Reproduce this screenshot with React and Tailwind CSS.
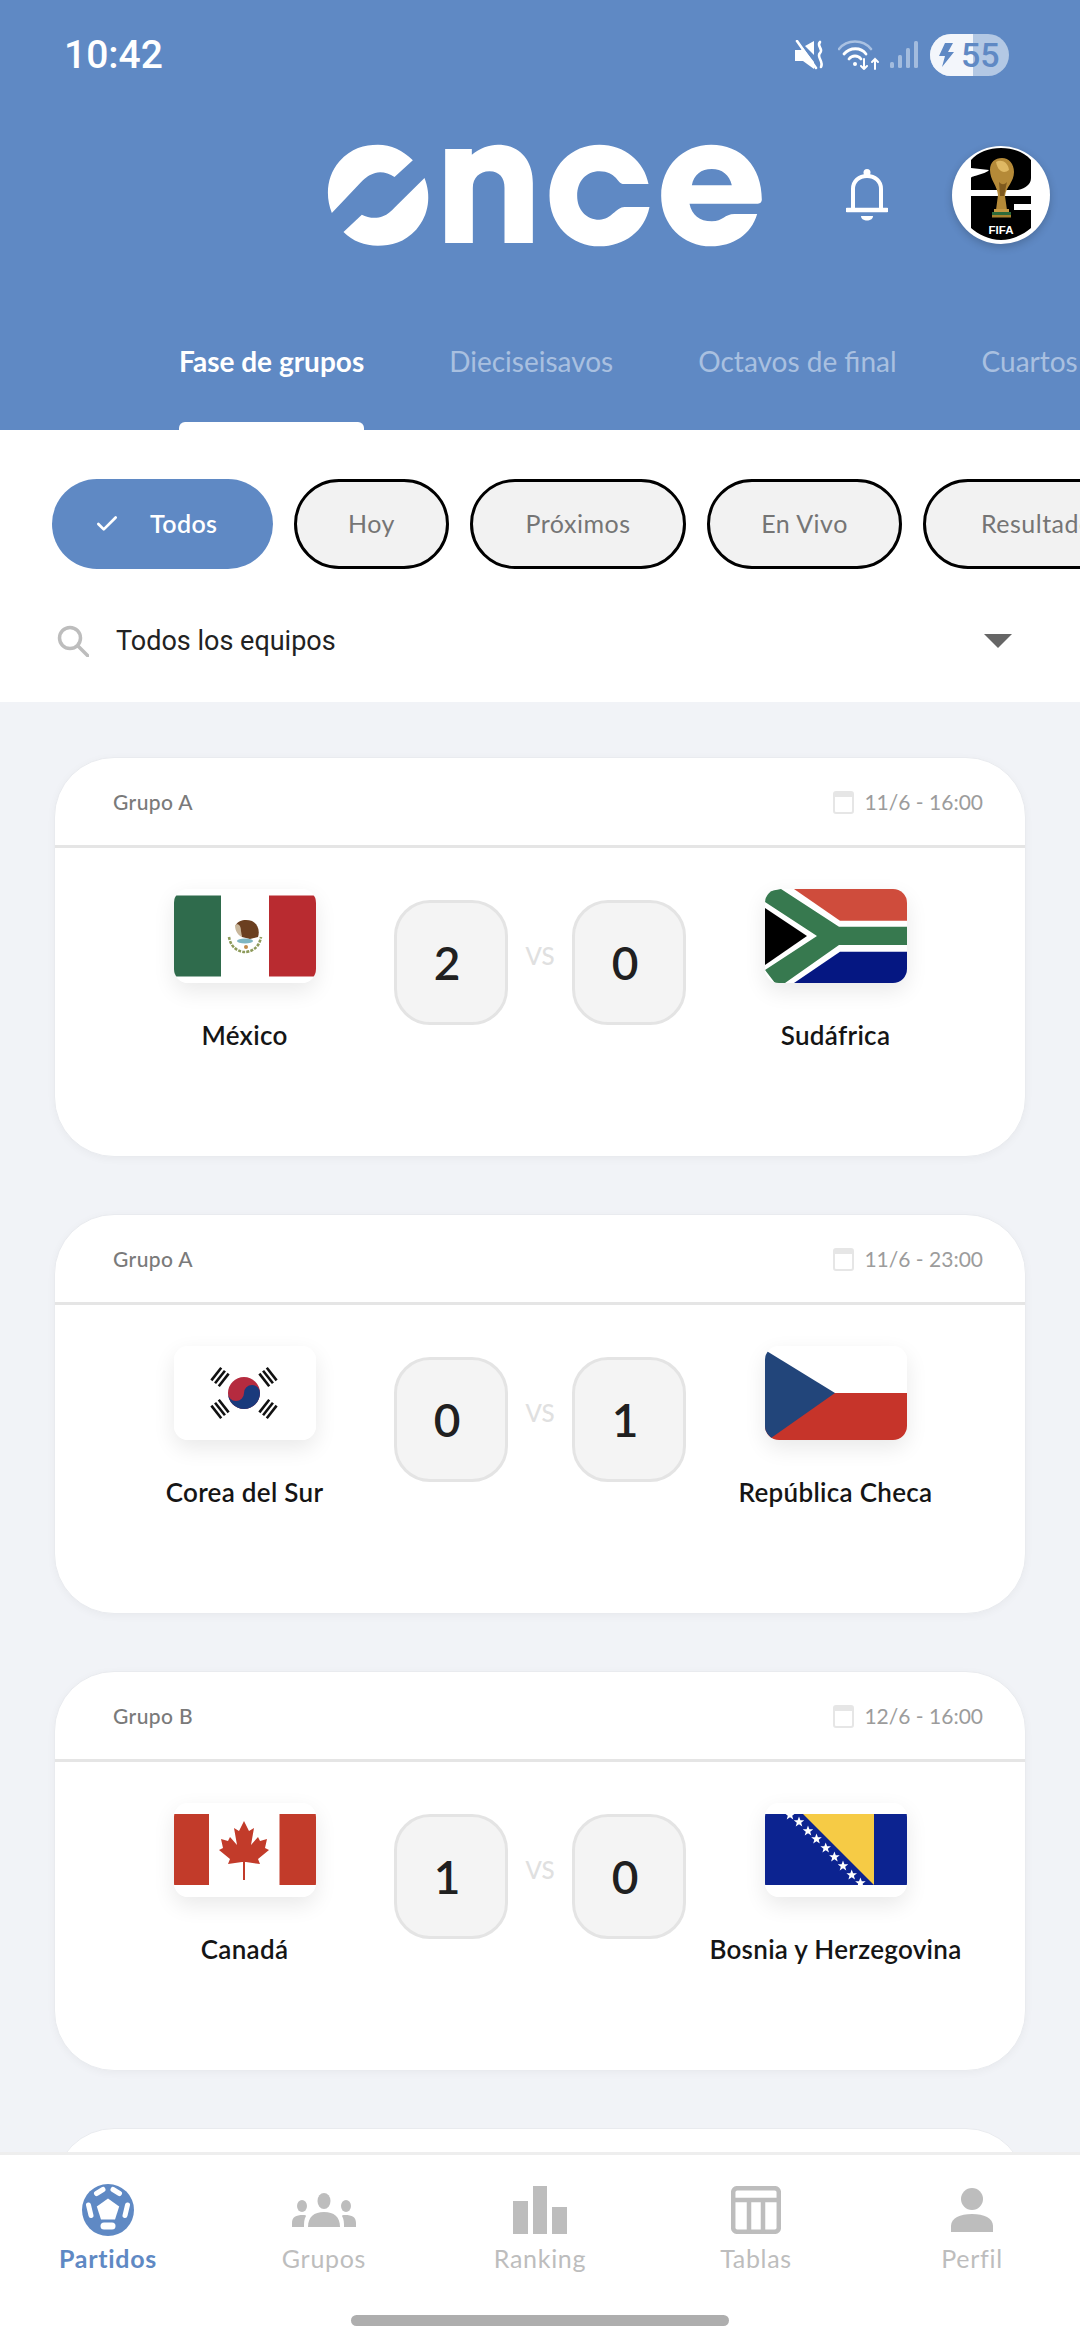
import { Check } from 'lucide-react';

// Logo drawn from the brand shapes
const OnceLogo = () => (
  <svg viewBox="75 70 1310 315" className="w-[437px] h-[105px] block shrink-0" fill="#fff">
    <path d="M92 280 C72 230 76 170 115 125 C150 85 190 75 230 75 C270 75 305 92 335 122 L280 172 C262 160 240 155 222 160 C205 165 195 172 180 187 Z" />
    <path d="M370 175 C390 225 385 285 345 330 C310 368 270 378 230 378 C190 378 155 365 127 337 L182 285 C200 295 225 298 245 290 C260 284 270 275 282 262 Z" />
    <path d="M432 88 H512 V105 C535 85 565 75 590 75 C655 75 695 120 695 190 V370 H610 V205 C610 175 595 155 565 155 C535 155 515 175 515 205 V370 H432 Z" />
    <path d="M1042 193 H965 C950 193 945 155 895 155 C855 155 828 185 828 228 C828 270 855 300 895 300 C930 300 945 262 970 262 H1045 C1030 335 970 380 895 380 C810 380 745 315 745 228 C745 140 810 75 895 75 C970 75 1030 125 1042 193 Z" />
    <path fillRule="evenodd" d="M1382 240 C1382 245 1378 252 1370 252 H1165 C1172 285 1195 305 1232 305 C1265 305 1270 283 1300 283 H1368 C1350 345 1295 380 1230 380 C1145 380 1080 315 1080 228 C1080 140 1145 75 1230 75 C1320 75 1382 140 1382 240 Z M1172 197 H1292 C1285 165 1262 148 1232 148 C1200 148 1178 165 1172 197 Z" />
  </svg>
);

const StatusIcons = () => (
  <div className="flex items-center">
    <svg viewBox="0 0 30 30" className="w-[30px] h-[30px]" fill="none">
      <path d="M0 10 H6 L8 8 L19 22 V29 L8 21 H0 Z" fill="#fff" />
      <path d="M10 6 L19 1 V15 Z" fill="#fff" />
      <path d="M2 1 L21 28" stroke="#fff" strokeWidth="2.6" strokeLinecap="round" />
      <path d="M25 2 C21 6 29 9 25 13 C21 17 29 21 26 27" stroke="#fff" strokeWidth="2.6" strokeLinecap="round" />
    </svg>
    <svg viewBox="0 0 42 30" className="w-[42px] h-[30px] ml-[13px]" fill="none" strokeLinecap="round">
      <path d="M1 9 C9 -1 25 -1 33 9" stroke="#a9c1e2" strokeWidth="2.6" />
      <path d="M6 14 C12 7 23 7 28 14" stroke="#fff" strokeWidth="2.8" />
      <path d="M11 19 C14 15 20 15 23 19" stroke="#fff" strokeWidth="2.8" />
      <circle cx="17" cy="24" r="2" fill="#fff" />
      <path d="M26 19 V29 M23 26 L26 29 L29 26" stroke="#fff" strokeWidth="2" />
      <path d="M37 29 V19 M34 22 L37 19 L40 22" stroke="#fff" strokeWidth="2" />
    </svg>
    <svg viewBox="0 0 28 30" className="w-[28px] h-[30px] ml-[10px]" fill="#a3bcde">
      <rect x="0" y="22" width="4" height="6" rx="1.5" />
      <rect x="8" y="15" width="4" height="13" rx="1.5" />
      <rect x="16" y="8" width="4" height="20" rx="1.5" />
      <rect x="24" y="1" width="4" height="27" rx="1.5" />
    </svg>
    <div className="relative ml-[12px] w-[79px] h-[42px] rounded-full overflow-hidden bg-[#b3c8e4] flex items-center">
      <div className="absolute left-0 top-0 bottom-0 w-[43px] bg-[#f3f6fb]" />
      <svg viewBox="0 0 16 26" className="relative ml-[8px] w-[16px] h-[26px]" fill="#5f89c4">
        <path d="M7 1 H15 L10 10 H16 L4 25 L7 14 H1 Z" />
      </svg>
      <span className="relative ml-[7px] font-['Roboto',sans-serif] font-medium text-[34px] leading-none text-[#5f89c4]">55</span>
    </div>
  </div>
);

const Avatar = () => (
  <div className="shrink-0 w-[98px] h-[98px] rounded-full overflow-hidden bg-white shadow-[0_3px_8px_rgba(0,0,0,0.2)]">
    <svg viewBox="6 6 98 98" className="w-full h-full">
      <path d="M25 20 C32 12 43 8 55 8 C67 8 78 12 85 20 V38 C85 44 80 48 72 50 H25 V38 C25 36 40 34 43 30 L25 28 Z" fill="#000" />
      <path d="M25 56 H85 V64 H68 V70 H85 V88 C78 94 67 100 55 100 C43 100 32 94 25 88 Z" fill="#000" />
      <path d="M44 30 C44 22 49 18 56 18 C63 18 68 24 68 32 C68 42 60 47 59 56 L61 70 H50 L52 55 C51 45 44 40 44 30 Z" fill="#b58a38" />
      <path d="M50 22 C55 19 62 22 63 30 C58 34 52 32 50 22 Z" fill="#dfb863" />
      <path d="M53 42 C56 45 58 45 61 42 L58 56 H54 Z" fill="#7f5a1e" />
      <rect x="48" y="69" width="15" height="3" fill="#c79a44" />
      <rect x="46" y="72" width="19" height="3" fill="#2d6b3a" />
      <rect x="46" y="75" width="19" height="2.5" fill="#a7832f" />
      <text x="55" y="94" textAnchor="middle" fill="#fff" fontSize="11.5" fontWeight="900" fontFamily="Liberation Sans, sans-serif">FIFA</text>
    </svg>
  </div>
);

const MexicoFlag = () => (
  <svg viewBox="0 0 142 94" className="w-full h-full block">
    <rect width="142" height="94" fill="#fff" />
    <rect y="6.5" width="47" height="81" fill="#2f6b4c" />
    <rect x="95" y="6.5" width="47" height="81" fill="#b92b30" />
    <path d="M55 48 C57 60 66 63 71 63 C76 63 85 60 87 48" fill="none" stroke="#8d9a5a" strokeWidth="2.6" strokeDasharray="3 1.2" />
    <path d="M62 36 C64 31 72 30 78 32 C84 35 86 42 84 48 L76 50 L68 48 Z" fill="#6b3f20" />
    <path d="M61 36 C64 34 67 36 67 42 L68 48 C64 46 61 42 61 36 Z" fill="#c9b79c" />
    <ellipse cx="71" cy="52" rx="8" ry="2.6" fill="#7fb6c2" />
    <circle cx="72" cy="58" r="2" fill="#c28a4a" />
  </svg>
);

const SouthAfricaFlag = () => (
  <svg viewBox="0 0 142 94" className="w-full h-full block">
    <rect width="142" height="94" fill="#fff" />
    <polygon points="29,0 142,0 142,31.7 75,31.7" fill="#cf4c3c" />
    <polygon points="29,94 142,94 142,62.7 75,62.7" fill="#051782" />
    <polygon points="16,0 74,37.7 142,37.7 142,56 74,56 20,94 10,94 0,81 52,47 0,13 0,3" fill="#37794f" />
    <polygon points="0,19 42,47 0,76" fill="#000" />
  </svg>
);

const Trigram = ({ x, y, angle }) => (
  <g transform={`translate(${x} ${y}) rotate(${angle})`} fill="#111">
    <rect x="-8" y="-6" width="16" height="2.6" />
    <rect x="-8" y="-1.3" width="16" height="2.6" />
    <rect x="-8" y="3.4" width="16" height="2.6" />
  </g>
);

const KoreaFlag = () => (
  <svg viewBox="0 0 142 94" className="w-full h-full block">
    <rect width="142" height="94" fill="#fff" />
    <Trigram x={46} y={31} angle={-52} />
    <Trigram x={94} y={31} angle={52} />
    <Trigram x={46} y={63} angle={52} />
    <Trigram x={94} y={63} angle={-52} />
    <circle cx="70" cy="47" r="16" fill="#b52b3f" />
    <path d="M54 47 A16 16 0 0 0 86 47 A8 8 0 0 0 70 47 A8 8 0 0 1 54 47 Z" fill="#1a3a7c" />
  </svg>
);

const CzechFlag = () => (
  <svg viewBox="0 0 142 94" className="w-full h-full block">
    <rect width="142" height="94" fill="#fff" />
    <rect y="47" width="142" height="47" fill="#c6342a" />
    <polygon points="0,4 70,47 6,92 0,85" fill="#22457a" />
  </svg>
);

const CanadaFlag = () => (
  <svg viewBox="0 0 142 94" className="w-full h-full block">
    <rect width="142" height="94" fill="#fff" />
    <rect y="11" width="35" height="71" fill="#c23b2a" />
    <rect x="105.5" y="11" width="36.5" height="71" fill="#c23b2a" />
    <polygon
      points="70,18 75,28 80,25 77,42 84,34 86,38 93,36 91,45 95,47 84,56 86,61 72,59 71,59 71,77 69,77 69,59 68,59 54,61 56,56 45,47 49,45 47,36 54,38 56,34 63,42 60,25 65,28"
      fill="#c23b2a"
    />
  </svg>
);

const BOSNIA_STARS = [
  [25, 1], [34, 8], [43, 17], [51.5, 25], [60.7, 34], [69.4, 43], [78, 52], [86.7, 61], [95.4, 69],
];

const BosniaFlag = () => (
  <svg viewBox="0 0 142 94" className="w-full h-full block">
    <rect width="142" height="94" fill="#fff" />
    <svg x="0" y="11" width="142" height="71" viewBox="0 0 142 71">
      <rect width="142" height="71" fill="#0c2390" />
      <polygon points="38,0 109,0 109,71" fill="#f6cb45" />
      {BOSNIA_STARS.map(([x, y]) => (
        <polygon
          key={x}
          transform={`translate(${x} ${y})`}
          points="0,-5.5 1.4,-1.8 5.3,-1.7 2.2,0.7 3.3,4.4 0,2.2 -3.3,4.4 -2.2,0.7 -5.3,-1.7 -1.4,-1.8"
          fill="#fff"
        />
      ))}
    </svg>
  </svg>
);

const MATCHES = [
  { group: 'Grupo A', date: '11/6 - 16:00', home: 'México', away: 'Sudáfrica', homeFlag: MexicoFlag, awayFlag: SouthAfricaFlag, homeScore: 2, awayScore: 0 },
  { group: 'Grupo A', date: '11/6 - 23:00', home: 'Corea del Sur', away: 'República Checa', homeFlag: KoreaFlag, awayFlag: CzechFlag, homeScore: 0, awayScore: 1 },
  { group: 'Grupo B', date: '12/6 - 16:00', home: 'Canadá', away: 'Bosnia y Herzegovina', homeFlag: CanadaFlag, awayFlag: BosniaFlag, homeScore: 1, awayScore: 0 },
];

const Team = ({ name, Flag }) => (
  <div className="flex flex-col items-center">
    <div className="w-[142px] h-[94px] rounded-[14px] overflow-hidden bg-white shadow-[0_8px_22px_rgba(0,0,0,0.09)]">
      <Flag />
    </div>
    <span className="mt-[34px] text-[26px] leading-[36px] font-semibold text-[#151515] tracking-[0.3px] whitespace-nowrap">{name}</span>
  </div>
);

const Score = ({ value }) => (
  <div className="w-[114px] h-[125px] rounded-[36px] border-[3px] border-[#e4e4e4] bg-[#f4f4f4] flex items-center justify-center pr-[8px] text-[46px] font-semibold text-[#202020]">
    {value}
  </div>
);

const MatchCard = ({ match }) => (
  <div className="shrink-0 h-[400px] rounded-[60px] bg-white border border-[#e9ebef] shadow-[0_2px_8px_rgba(0,0,0,0.04)] overflow-hidden">
    <div className="h-[90px] border-b-[3px] border-[#e5e5e5] pl-[58px] pr-[42px] flex items-center justify-between">
      <span className="text-[21px] font-medium text-[#7a7a7a] tracking-[0.4px]">{match.group}</span>
      <div className="flex items-center gap-[10px]">
        <svg viewBox="0 0 21 24" className="w-[21px] h-[24px]" fill="none">
          <rect x="1" y="2" width="19" height="21" rx="2" stroke="#e6e6e6" strokeWidth="2" />
          <rect x="1" y="2" width="19" height="5" fill="#e6e6e6" />
        </svg>
        <span className="text-[21px] text-[#9c9c9c]">{match.date}</span>
      </div>
    </div>
    <div className="pt-[41px] px-[40px] grid grid-cols-[299px_1fr_299px]">
      <Team name={match.home} Flag={match.homeFlag} />
      <div className="flex items-start justify-between mt-[11px]">
        <Score value={match.homeScore} />
        <span className="mt-[38px] text-[24px] font-medium text-[#e0e0e0]">VS</span>
        <Score value={match.awayScore} />
      </div>
      <Team name={match.away} Flag={match.awayFlag} />
    </div>
  </div>
);

const FILTERS = ['Hoy', 'Próximos', 'En Vivo', 'Resultados'];
const FILTER_WIDTHS = ['w-[155px]', 'w-[216px]', 'w-[195px]', 'w-[240px]'];

const NAV = [
  {
    label: 'Partidos',
    active: true,
    icon: (
      <svg viewBox="0 0 54 54" className="w-[54px] h-[54px]">
        <circle cx="27" cy="27" r="26" fill="#5f89c4" />
        <polygon points="27,15.5 38.2,23.5 34,36.5 20,36.5 15.8,23.5" fill="#fff" />
        <g stroke="#fff" strokeLinecap="round" fill="none">
          <path d="M15.5 10.5 L22 6.5" strokeWidth="5" />
          <path d="M32 6.5 L38.5 10.5" strokeWidth="5" />
          <path d="M46.5 22 L44 32.5" strokeWidth="5" />
          <path d="M7.5 22 L10 32.5" strokeWidth="5" />
          <path d="M23 43 L31 43" strokeWidth="7" />
        </g>
      </svg>
    ),
  },
  {
    label: 'Grupos',
    icon: (
      <svg viewBox="0 0 64 34" className="w-[64px] h-[34px]" fill="#bdbdbd">
        <ellipse cx="32" cy="8" rx="6.5" ry="8" />
        <ellipse cx="10" cy="13" rx="5" ry="6" />
        <ellipse cx="54" cy="13" rx="5" ry="6" />
        <path d="M16 34 C16 24 22 19 32 19 C42 19 48 24 48 34 Z" />
        <path d="M0 34 V30 C0 24 4 22 11 22 C13 22 14 22 14 23 C12 26 12 30 12 34 Z" />
        <path d="M64 34 V30 C64 24 60 22 53 22 C51 22 50 22 50 23 C52 26 52 30 52 34 Z" />
      </svg>
    ),
  },
  {
    label: 'Ranking',
    icon: (
      <svg viewBox="0 0 54 48" className="w-[54px] h-[48px]" fill="#bdbdbd">
        <rect x="0" y="15" width="15" height="33" />
        <rect x="20" y="0" width="14" height="48" />
        <rect x="39" y="21" width="15" height="27" />
      </svg>
    ),
  },
  {
    label: 'Tablas',
    icon: (
      <svg viewBox="0 0 50 48" className="w-[50px] h-[48px]" fill="none" stroke="#bdbdbd" strokeWidth="4.5">
        <rect x="2.2" y="2.2" width="45.6" height="43.6" rx="4" />
        <path d="M2 14 H48 M18 14 V46 M32 14 V46" />
      </svg>
    ),
  },
  {
    label: 'Perfil',
    icon: (
      <svg viewBox="0 0 44 44" className="w-[44px] h-[44px]" fill="#bdbdbd">
        <ellipse cx="22" cy="11" rx="11" ry="11" />
        <path d="M1 44 V38 C1 30 10 26 22 26 C34 26 43 30 43 38 V44 Z" />
      </svg>
    ),
  },
];

export default function App() {
  return (
    <div className="w-[1080px] h-[2340px] overflow-hidden flex flex-col bg-[#f1f3f7] font-['Lato',sans-serif]">
      {/* Blue header */}
      <header className="shrink-0 h-[430px] bg-[#5f89c4] flex flex-col">
        <div className="h-[110px] pl-[64px] pr-[71px] flex items-center justify-between">
          <span className="font-['Roboto',sans-serif] font-medium text-[39px] leading-none text-white">10:42</span>
          <StatusIcons />
        </div>
        <div className="h-[110px] mt-[30px] pl-[326px] flex items-center">
          <OnceLogo />
          <svg viewBox="0 0 42 52" className="shrink-0 ml-[83px] w-[42px] h-[52px]" fill="none" stroke="#fff">
            <path d="M7 39 V20 C7 12 13 7 21 7 C29 7 35 12 35 20 V39" strokeWidth="4" />
            <path d="M1 41 H41" strokeWidth="4.5" strokeLinecap="round" />
            <circle cx="21" cy="3.5" r="3.5" fill="#fff" stroke="none" />
            <path d="M15 47 H27 C27 53 15 53 15 47 Z" fill="#fff" stroke="none" />
          </svg>
          <div className="ml-[64px]">
            <Avatar />
          </div>
        </div>
        <nav className="mt-auto h-[96px] pl-[179px] flex gap-[85px] overflow-hidden whitespace-nowrap">
          <div className="flex flex-col items-stretch">
            <span className="mt-[9px] text-[28px] leading-[36px] font-bold text-white">Fase de grupos</span>
            <div className="mt-auto h-[8px] rounded-t-[6px] bg-white" />
          </div>
          {['Dieciseisavos', 'Octavos de final', 'Cuartos de final'].map((tab) => (
            <span key={tab} className="mt-[9px] text-[28px] leading-[36px] text-[#a9c0e0]">{tab}</span>
          ))}
        </nav>
      </header>

      {/* Filters */}
      <section className="shrink-0 h-[272px] bg-white flex flex-col">
        <div className="mt-[49px] h-[90px] pl-[52px] flex gap-[21px] overflow-hidden">
          <div className="shrink-0 w-[221px] h-[90px] rounded-full bg-[#5f89c4] flex items-center pl-[42px] gap-[30px]">
            <Check size={26} color="#fff" strokeWidth={2.5} />
            <span className="text-[25px] font-semibold text-white tracking-[0.4px]">Todos</span>
          </div>
          {FILTERS.map((filter, i) => (
            <div
              key={filter}
              className={`shrink-0 ${FILTER_WIDTHS[i]} h-[90px] rounded-full border-[3px] border-black bg-[#f2f2f2] flex items-center justify-center text-[25px] tracking-[0.5px] text-[#757575]`}
            >
              {filter}
            </div>
          ))}
        </div>
        <div className="mt-[43px] h-[58px] pl-[57px] pr-[68px] flex items-center">
          <svg viewBox="0 0 32 32" className="w-[32px] h-[32px]" fill="none" stroke="#bdbdbd" strokeWidth="3.5">
            <circle cx="13" cy="13" r="10.5" />
            <path d="M21 21 L31 31" strokeLinecap="round" />
          </svg>
          <span className="ml-[27px] font-['Roboto',sans-serif] text-[27px] text-[#222]">Todos los equipos</span>
          <div className="ml-auto w-0 h-0 border-l-[14px] border-r-[14px] border-t-[14px] border-l-transparent border-r-transparent border-t-[#666]" />
        </div>
      </section>

      {/* Matches */}
      <main className="flex-1 min-h-0 overflow-hidden px-[54px] pt-[55px] flex flex-col gap-[57px]">
        {MATCHES.map((match) => (
          <MatchCard key={match.date} match={match} />
        ))}
        <div className="shrink-0 h-[400px] rounded-[60px] bg-white border border-[#e9ebef]" />
      </main>

      {/* Bottom nav */}
      <footer className="shrink-0 h-[188px] bg-white border-t-[3px] border-[#eeeeee] flex flex-col">
        <div className="mt-[27px] grid grid-cols-5">
          {NAV.map((item) => (
            <div key={item.label} className="flex flex-col items-center">
              <div className="h-[56px] flex items-center justify-center">{item.icon}</div>
              <span className={`mt-[5px] text-[25px] leading-[30px] tracking-[0.7px] ${item.active ? 'font-bold text-[#5f89c4]' : 'text-[#bdbdbd]'}`}>
                {item.label}
              </span>
            </div>
          ))}
        </div>
        <div className="mt-auto mb-[14px] mx-auto w-[378px] h-[11px] rounded-full bg-[#aeaeae]" />
      </footer>
    </div>
  );
}
